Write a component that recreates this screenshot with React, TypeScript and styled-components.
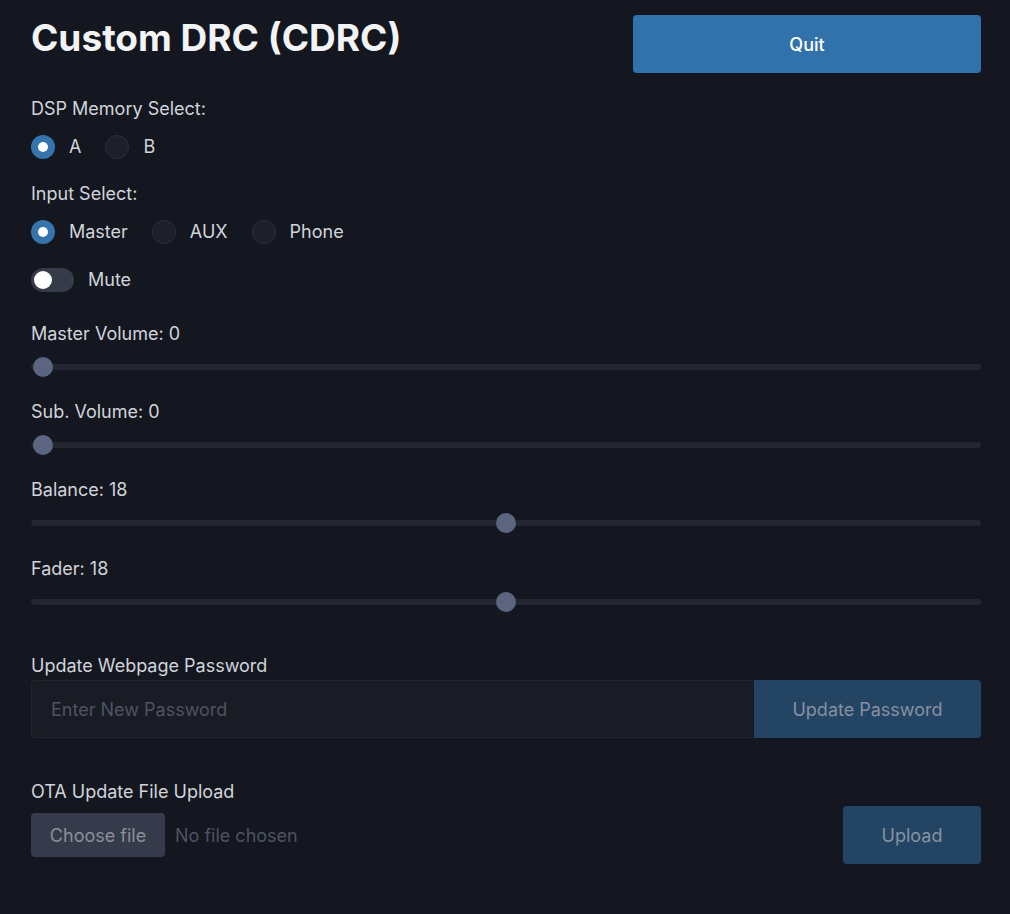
import React, { useState } from "react";
import styled, { createGlobalStyle } from "styled-components";

const Global = createGlobalStyle`
  html, body { margin: 0; padding: 0; background: #14171f; }
  body { font-family: Inter, "Noto Sans", sans-serif; color: #d1d4db; }
  * { box-sizing: border-box; }
`;

const Page = styled.div`
  padding: 15px 29px 40px 31px;
  min-height: 914px;
  display: flex;
  flex-direction: column;
`;

const Header = styled.div`
  display: flex;
  justify-content: space-between;
  align-items: flex-start;
`;

const Title = styled.h1`
  margin: 1px 0 0;
  font-size: 37px;
  line-height: 44px;
  font-weight: 700;
  color: #f2f3f5;
`;

const QuitButton = styled.button`
  width: 348px;
  height: 58px;
  border: none;
  border-radius: 4px;
  background: #3272aa;
  color: #ffffff;
  font-family: Inter, sans-serif;
  font-size: 18px;
  font-weight: 500;
`;

const Section = styled.div<{ $mt: number }>`
  margin-top: ${(p) => p.$mt}px;
  display: flex;
  flex-direction: column;
`;

const Label = styled.div`
  font-size: 18px;
  line-height: 24px;
  color: #d1d4db;
`;

const RadioRow = styled.div`
  display: flex;
  align-items: center;
  gap: 24px;
  margin-top: 14px;
`;

const RadioOption = styled.label`
  display: flex;
  align-items: center;
  gap: 14px;
  font-size: 18px;
  line-height: 24px;
  color: #d1d4db;
  cursor: pointer;
`;

const RadioCircle = styled.span<{ $checked: boolean }>`
  width: 24px;
  height: 24px;
  border-radius: 50%;
  display: flex;
  align-items: center;
  justify-content: center;
  background: ${(p) => (p.$checked ? "#3574ad" : "#1d2029")};
  border: ${(p) => (p.$checked ? "none" : "1.5px solid #2b2f3a")};
  &::after {
    content: "";
    display: ${(p) => (p.$checked ? "block" : "none")};
    width: 10px;
    height: 10px;
    border-radius: 50%;
    background: #ffffff;
  }
`;

const ToggleRow = styled.label`
  display: flex;
  align-items: center;
  gap: 14px;
  font-size: 18px;
  line-height: 24px;
  color: #d1d4db;
  margin-top: 24px;
`;

const ToggleTrack = styled.span<{ $on: boolean }>`
  width: 43px;
  height: 24px;
  border-radius: 12px;
  background: ${(p) => (p.$on ? "#3574ad" : "#363b4a")};
  display: flex;
  align-items: center;
  padding: 0 3px;
  justify-content: ${(p) => (p.$on ? "flex-end" : "flex-start")};
  &::after {
    content: "";
    width: 18px;
    height: 18px;
    border-radius: 50%;
    background: #ffffff;
  }
`;

const SliderWrap = styled.div`
  margin-top: 11px;
  position: relative;
  height: 20px;
  &::before {
    content: "";
    position: absolute;
    left: 0;
    right: 0;
    top: 7px;
    height: 6px;
    border-radius: 3px;
    background: #232732;
  }
`;

const Range = styled.input`
  -webkit-appearance: none;
  appearance: none;
  position: relative;
  display: block;
  width: calc(100% - 4px);
  margin: 0 2px;
  height: 20px;
  background: transparent;
  &::-webkit-slider-runnable-track {
    height: 6px;
    background: transparent;
  }
  &::-webkit-slider-thumb {
    -webkit-appearance: none;
    appearance: none;
    width: 20px;
    height: 20px;
    border-radius: 50%;
    background: #5b6580;
    border: none;
    margin-top: -7px;
  }
`;

const FieldRow = styled.div`
  display: flex;
  margin-top: 2px;
  height: 58px;
`;

const TextInput = styled.input`
  flex: 1;
  height: 58px;
  background: #191c24;
  border: 1px solid #22252e;
  border-right: none;
  border-radius: 4px 0 0 4px;
  padding: 0 19px;
  font-family: Inter, sans-serif;
  font-size: 18px;
  color: #d1d4db;
  outline: none;
  &::placeholder {
    color: #4e5463;
  }
`;

const MutedButton = styled.button<{ $w: number; $radius: string }>`
  width: ${(p) => p.$w}px;
  height: 58px;
  border: none;
  border-radius: ${(p) => p.$radius};
  background: #234463;
  color: #8691a1;
  font-family: Inter, sans-serif;
  font-size: 18px;
`;

const UploadRow = styled.div`
  display: flex;
  align-items: center;
  justify-content: space-between;
  margin-top: 2px;
`;

const FilePicker = styled.label`
  display: flex;
  align-items: center;
  gap: 10px;
`;

const ChooseButton = styled.span`
  width: 134px;
  height: 44px;
  border-radius: 4px;
  background: #363b4b;
  color: #8a8f9b;
  font-size: 18px;
  display: flex;
  align-items: center;
  justify-content: center;
`;

const NoFile = styled.span`
  font-size: 18px;
  color: #4e5361;
`;

function Slider({ label, value, max, mt }: { label: string; value: number; max: number; mt: number }) {
  const [v, setV] = useState(value);
  return (
    <Section $mt={mt}>
      <Label>
        {label}: {v}
      </Label>
      <SliderWrap>
        <Range type="range" min={0} max={max} value={v} onChange={(e) => setV(Number(e.target.value))} />
      </SliderWrap>
    </Section>
  );
}

export default function App() {
  const [mem, setMem] = useState("A");
  const [input, setInput] = useState("Master");
  const [mute, setMute] = useState(false);

  return (
    <>
      <Global />
      <Page>
        <Header>
          <Title>Custom DRC (CDRC)</Title>
          <QuitButton>Quit</QuitButton>
        </Header>

        <Section $mt={24}>
          <Label>DSP Memory Select:</Label>
          <RadioRow>
            {["A", "B"].map((o) => (
              <RadioOption key={o} onClick={() => setMem(o)}>
                <RadioCircle $checked={mem === o} />
                {o}
              </RadioOption>
            ))}
          </RadioRow>
        </Section>

        <Section $mt={23}>
          <Label>Input Select:</Label>
          <RadioRow>
            {["Master", "AUX", "Phone"].map((o) => (
              <RadioOption key={o} onClick={() => setInput(o)}>
                <RadioCircle $checked={input === o} />
                {o}
              </RadioOption>
            ))}
          </RadioRow>
          <ToggleRow onClick={() => setMute(!mute)}>
            <ToggleTrack $on={mute} />
            Mute
          </ToggleRow>
        </Section>

        <Slider label="Master Volume" value={0} max={36} mt={30} />
        <Slider label="Sub. Volume" value={0} max={36} mt={23} />
        <Slider label="Balance" value={18} max={36} mt={23} />
        <Slider label="Fader" value={18} max={36} mt={24} />

        <Section $mt={42}>
          <Label>Update Webpage Password</Label>
          <FieldRow>
            <TextInput type="password" placeholder="Enter New Password" />
            <MutedButton $w={227} $radius="0 4px 4px 0">Update Password</MutedButton>
          </FieldRow>
        </Section>

        <Section $mt={42}>
          <Label>OTA Update File Upload</Label>
          <UploadRow>
            <FilePicker>
              <ChooseButton>Choose file</ChooseButton>
              <NoFile>No file chosen</NoFile>
            </FilePicker>
            <MutedButton $w={138} $radius="4px">Upload</MutedButton>
          </UploadRow>
        </Section>
      </Page>
    </>
  );
}
